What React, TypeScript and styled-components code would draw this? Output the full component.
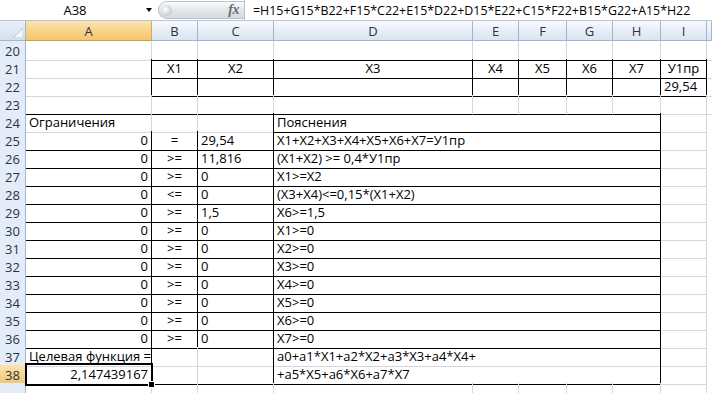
import React from "react";
import styled, { createGlobalStyle } from "styled-components";

const GRID = "#d0d7e5";
const INK = "#000";
const HDR_LINE = "#9eb6ce";
const COLS = "26px 126px 46px 76px 199px 46px 48px 46px 48px 46px 1fr";

const GlobalStyle = createGlobalStyle`
  html, body {
    margin: 0;
    padding: 0;
    background: #fff;
    overflow: hidden;
  }
  body {
    font-family: "Open Sans", "Liberation Sans", sans-serif;
    color: #000;
  }
`;

const Screen = styled.div`
  width: 712px;
  height: 393px;
  overflow: hidden;
  display: flex;
  flex-direction: column;
  background: #fff;
`;

const FormulaBar = styled.div`
  display: flex;
  height: 20px;
  border-bottom: 1px solid #b7c5d8;
  background: #fff;
`;

const NameBox = styled.div`
  width: 158px;
  display: flex;
  align-items: center;
`;

const NameText = styled.div`
  flex: 1;
  text-align: center;
  font-size: 13px;
  padding-left: 4px;
`;

const DropArrow = styled.div`
  width: 0;
  height: 0;
  margin-right: 6px;
  border-left: 3.5px solid transparent;
  border-right: 3.5px solid transparent;
  border-top: 4px solid #000;
`;

const Pill = styled.div`
  width: 85px;
  margin: 1px 0;
  display: flex;
  align-items: center;
  justify-content: space-between;
  border: 1px solid #b6c2d2;
  border-right: none;
  border-radius: 10px 0 0 10px;
  background: linear-gradient(#fbfbfb, #e2e4e8 55%, #d6d9de);
`;

const Dimple = styled.div`
  width: 11px;
  height: 11px;
  margin-left: 2px;
  border-radius: 50%;
  background: radial-gradient(circle at 40% 40%, #ffffff, #c9ccd1 70%, #a9adb4);
`;

const Fx = styled.div`
  font-family: "Liberation Serif", serif;
  font-style: italic;
  font-weight: bold;
  font-size: 14px;
  color: #6b6b6b;
  margin-right: 5px;
  letter-spacing: -0.5px;
`;

const FormulaText = styled.div`
  flex: 1;
  display: flex;
  align-items: center;
  border-left: 1px solid #b6c2d2;
  padding-left: 8px;
  font-size: 12.4px;
  white-space: nowrap;
`;

const Spacer = styled.div`
  height: 4px;
  background: #fff;
`;

const Row = styled.div<{ $h: number }>`
  display: grid;
  grid-template-columns: ${COLS};
  height: ${p => p.$h}px;
  flex-shrink: 0;
`;

const ColHead = styled.div<{ $sel?: boolean }>`
  display: flex;
  align-items: center;
  justify-content: center;
  font-size: 13px;
  color: #27344a;
  border-right: 1px solid ${p => (p.$sel ? "#e5a54a" : HDR_LINE)};
  border-bottom: 1px solid ${p => (p.$sel ? "#d99a3e" : HDR_LINE)};
  background: ${p =>
    p.$sel
      ? "linear-gradient(#fbe3b2, #f8d48d 50%, #f5c56c)"
      : "linear-gradient(#f8fafd, #e8eef7 50%, #dbe4f1)"};
`;

const Corner = styled.div`
  border-right: 1px solid ${HDR_LINE};
  border-bottom: 1px solid ${HDR_LINE};
  background: linear-gradient(#e9eff8, #d5e0ee);
  display: flex;
  align-items: flex-end;
  justify-content: flex-end;
  padding: 0 2px 2px 0;
`;

const RowHead = styled.div<{ $sel?: boolean }>`
  display: flex;
  align-items: center;
  justify-content: center;
  font-size: 13px;
  color: #27344a;
  border-right: 1px solid ${p => (p.$sel ? "#e5a54a" : HDR_LINE)};
  border-bottom: 1px solid ${p => (p.$sel ? "#e5a54a" : "#c5d3e3")};
  background: ${p =>
    p.$sel ? "linear-gradient(#fbe3b2, #f5c56c)" : "#e4ecf7"};
  padding-top: 1px;
`;

const Cell = styled.div<{
  $a?: "l" | "c" | "r";
  $rb?: boolean;
  $bb?: boolean;
  $span?: number;
}>`
  position: relative;
  grid-column: span ${p => p.$span || 1};
  border-right: 1px solid ${p => (p.$rb ? INK : p.$span ? "transparent" : GRID)};
  border-bottom: 1px solid ${p => (p.$bb ? INK : GRID)};
  text-align: ${p => (p.$a === "r" ? "right" : p.$a === "c" ? "center" : "left")};
  padding: 1px 3px 0 3px;
  font-size: 13px;
  line-height: 16px;
  white-space: nowrap;
`;

const Selection = styled.div`
  position: absolute;
  left: -1px;
  top: -2px;
  right: -2px;
  bottom: -2px;
  border: 2px solid #000;
  pointer-events: none;
  z-index: 2;
`;

const FillHandle = styled.div`
  position: absolute;
  right: -4px;
  bottom: -4px;
  width: 5px;
  height: 5px;
  background: #000;
  border: 1px solid #fff;
  z-index: 3;
`;

type C = {
  t?: string;
  a?: "l" | "c" | "r";
  rb?: boolean;
  bb?: boolean;
  span?: number;
  sel?: boolean;
};

const empty = (n: number, o: C = {}): C[] => Array.from({ length: n }, () => ({ ...o }));

// one line of the constraints table: value, sign, bound, explanation (D:H merged)
const constraint = (c: string, sign: string, v: string, note: string): C[] => [
  { t: c, a: "r", rb: true, bb: true },
  { t: sign, a: "c", rb: true, bb: true },
  { t: v, a: "l", rb: true, bb: true },
  { t: note, span: 5, rb: true, bb: true },
  {},
];

const rows: { n: number; label?: boolean; cells: C[] }[] = [
  { n: 20, cells: [{}, ...empty(8, { bb: true }), {}] },
  {
    n: 21,
    cells: [
      { rb: true },
      ...["X1", "X2", "X3", "X4", "X5", "X6", "X7", "У1пр"].map(
        (t): C => ({ t, a: "c", rb: true, bb: true })
      ),
      {},
    ],
  },
  {
    n: 22,
    cells: [{ rb: true }, ...empty(7, { rb: true, bb: true }), { t: "29,54", rb: true, bb: true }, {}],
  },
  { n: 23, cells: [...empty(8, { bb: true }), {}, {}] },
  {
    n: 24,
    cells: [
      { t: "Ограничения" },
      {},
      { rb: true },
      { t: "Пояснения", span: 5, rb: true, bb: true },
      {},
    ],
  },
  { n: 25, cells: constraint("0", "=", "29,54", "X1+X2+X3+X4+X5+X6+X7=У1пр") },
  { n: 26, cells: constraint("0", ">=", "11,816", "(X1+X2) >= 0,4*У1пр") },
  { n: 27, cells: constraint("0", ">=", "0", "X1>=X2") },
  { n: 28, cells: constraint("0", "<=", "0", "(X3+X4)<=0,15*(X1+X2)") },
  { n: 29, cells: constraint("0", ">=", "1,5", "X6>=1,5") },
  { n: 30, cells: constraint("0", ">=", "0", "X1>=0") },
  { n: 31, cells: constraint("0", ">=", "0", "X2>=0") },
  { n: 32, cells: constraint("0", ">=", "0", "X3>=0") },
  { n: 33, cells: constraint("0", ">=", "0", "X4>=0") },
  { n: 34, cells: constraint("0", ">=", "0", "X5>=0") },
  { n: 35, cells: constraint("0", ">=", "0", "X6>=0") },
  { n: 36, cells: constraint("0", ">=", "0", "X7>=0") },
  {
    n: 37,
    cells: [
      { t: "Целевая функция =", rb: true },
      {},
      { rb: true },
      { t: "a0+a1*X1+a2*X2+a3*X3+a4*X4+", span: 5, rb: true },
      {},
    ],
  },
  {
    n: 38,
    cells: [
      { t: "2,147439167", a: "r", rb: true, bb: true, sel: true },
      { bb: true },
      { rb: true, bb: true },
      { t: "+a5*X5+a6*X6+a7*X7", span: 5, rb: true, bb: true },
      {},
    ],
  },
  { n: 39, label: false, cells: empty(10) },
];

const CornerMark = () => (
  <svg width="10" height="10" viewBox="0 0 10 10">
    <polygon points="10,0 10,10 0,10" fill="#f4f7fb" stroke="#a9b9cd" strokeWidth="0.8" />
  </svg>
);

const HEADS = ["A", "B", "C", "D", "E", "F", "G", "H", "I", ""];

export default function App() {
  return (
    <Screen>
      <GlobalStyle />
      <FormulaBar>
        <NameBox>
          <NameText>A38</NameText>
          <DropArrow />
        </NameBox>
        <Pill>
          <Dimple />
          <Fx>fx</Fx>
        </Pill>
        <FormulaText>=H15+G15*B22+F15*C22+E15*D22+D15*E22+C15*F22+B15*G22+A15*H22</FormulaText>
      </FormulaBar>
      <Spacer />
      <Row $h={20}>
        <Corner>
          <CornerMark />
        </Corner>
        {HEADS.map((h, i) => (
          <ColHead key={i} $sel={h === "A"}>
            {h}
          </ColHead>
        ))}
      </Row>
      {rows.map(r => (
        <Row key={r.n} $h={18}>
          <RowHead $sel={r.n === 38}>{r.label === false ? "" : r.n}</RowHead>
          {r.cells.map((c, i) => (
            <Cell key={i} $a={c.a} $rb={c.rb} $bb={c.bb} $span={c.span}>
              {c.t}
              {c.sel && (
                <>
                  <Selection />
                  <FillHandle />
                </>
              )}
            </Cell>
          ))}
        </Row>
      ))}
    </Screen>
  );
}
